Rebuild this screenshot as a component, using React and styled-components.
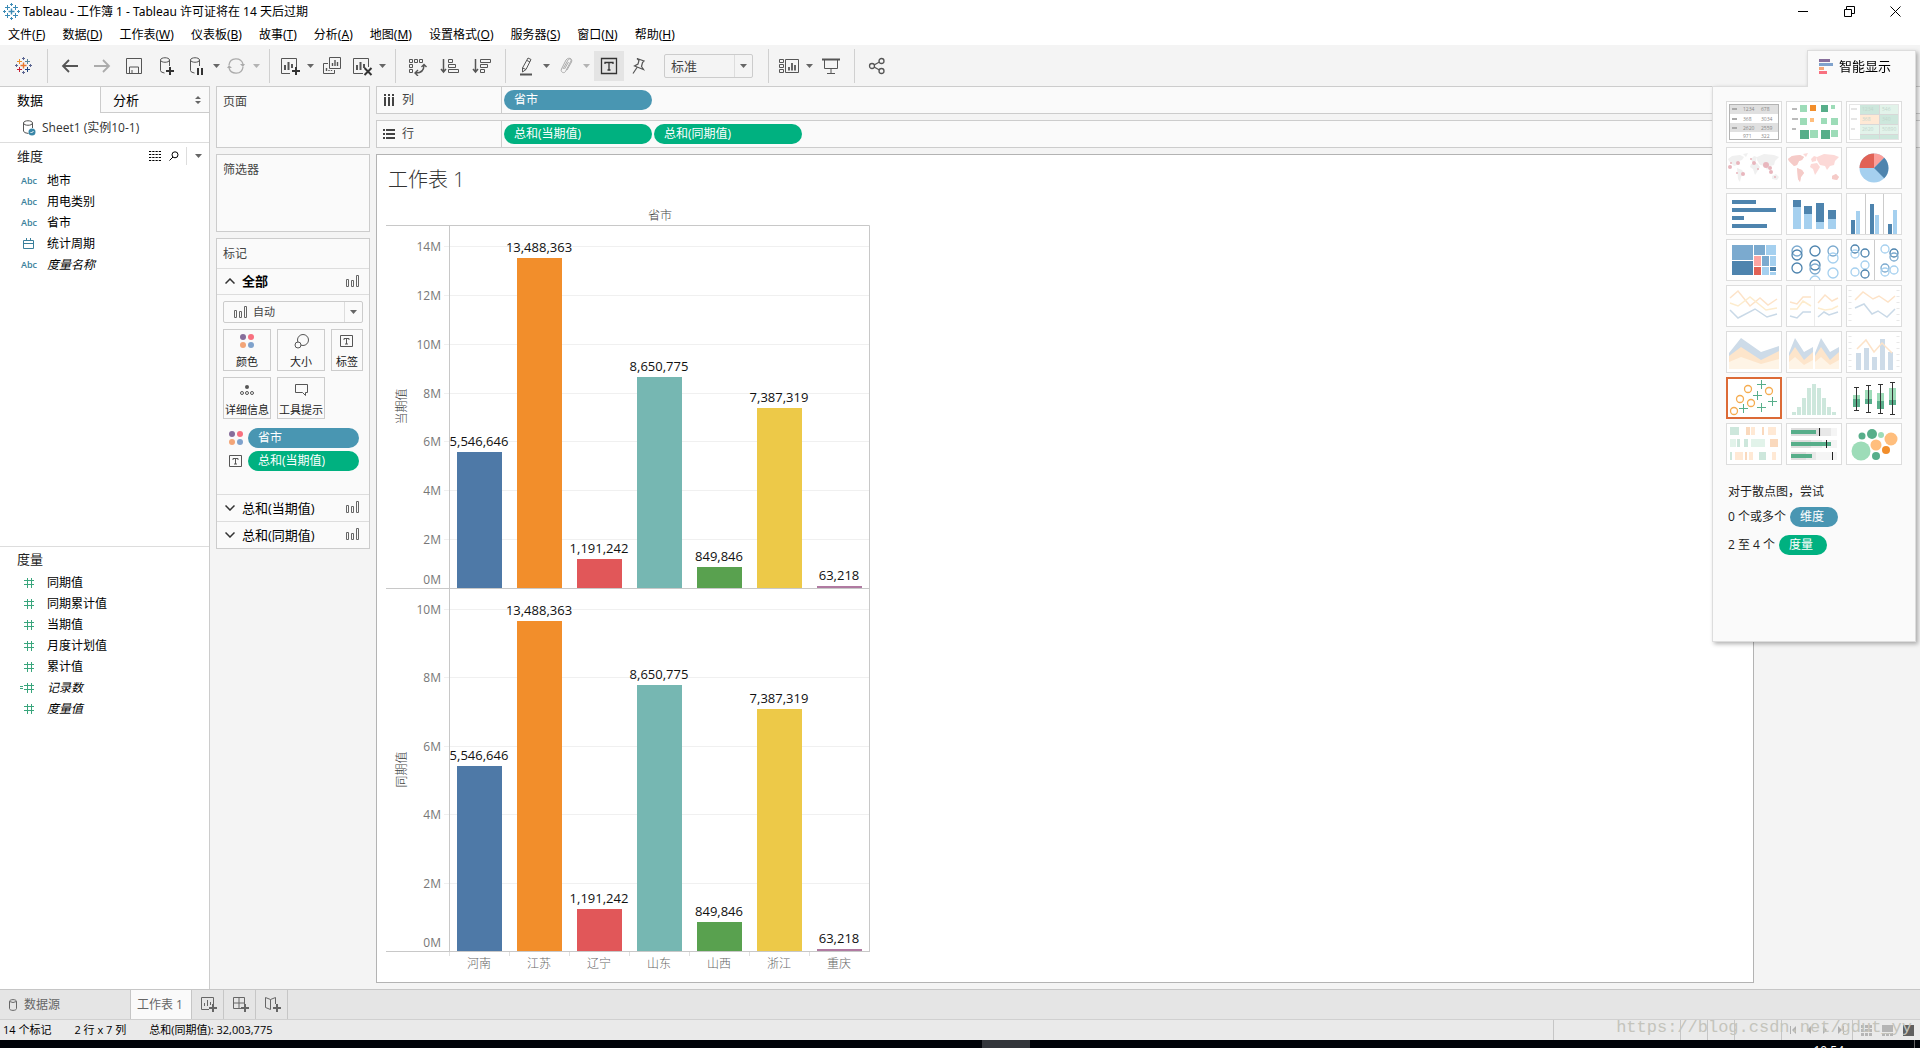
import React, { useState } from 'react';
import styled, { createGlobalStyle, css } from 'styled-components';

const GlobalStyle = createGlobalStyle`
    * {
        box-sizing: border-box;
    }
    body {
        margin: 0;
        background-color: #f4f4f4;
    }
    body, button, select {
        font-family: "Open Sans", "Noto Sans CJK SC", sans-serif;
        font-size: 12px;
        line-height: 16px;
        color: #000;
    }
    button {
        padding: 0;
        border: none;
        background: none;
        cursor: pointer;
    }
    svg {
        display: block;
        flex: none;
    }
`;

/* ---------- window ---------- */

const Container = styled.div`
    position: relative;
    display: flex;
    flex-direction: column;
    min-height: 100vh;
    overflow: hidden;
`;

const TitleBar = styled.header`
    display: flex;
    align-items: center;
    height: 23px;
    padding: 0 2px 0 3px;
    background-color: #fff;
`;

const AppName = styled.h1`
    flex: 1;
    margin: 0 0 0 3px;
    font-family: "Noto Sans", "Noto Sans CJK SC", sans-serif;
    font-size: 12px;
    font-weight: 400;
`;

const WindowButton = styled.button`
    display: flex;
    align-items: center;
    justify-content: center;
    width: 46px;
    height: 20px;
`;

const MenuBar = styled.nav`
    display: flex;
    align-items: center;
    gap: 17px;
    height: 22px;
    padding: 2px 0 0 8px;
    background-color: #fff;
`;

const MenuItem = styled.button`
    font-family: "Noto Sans", "Noto Sans CJK SC", sans-serif;
    white-space: nowrap;
`;

/* ---------- toolbar ---------- */

const Toolbar = styled.div`
    display: flex;
    align-items: center;
    height: 41px;
`;

const ToolGroup = styled.div`
    display: flex;
    align-items: center;
    height: 34px;
    padding: 0 7px 0 6px;
    border-right: 1px solid #d0d0d0;

    &:last-child {
        border-right: none;
    }
`;

const toolWidths = { logo: 34, l: 32, m: 28, s: 24, caret: 12 };

const Tool = styled.button`
    display: flex;
    align-items: center;
    justify-content: center;
    width: ${(p) => toolWidths[p.$size || 'm']}px;
    height: 30px;
    color: #555;
    opacity: ${(p) => (p.disabled ? 0.45 : 1)};
    ${(p) => p.$active && css`
        width: 30px;
        margin: 0 2px;
        background-color: #e4e4e4;
    `}
`;

const SelectBox = styled.label`
    position: relative;
    display: flex;
    ${(p) => p.$toolbar && css`
        width: 89px;
        margin: 0 8px 0 14px;
    `}

    select {
        appearance: none;
        width: 100%;
        height: ${(p) => (p.$toolbar ? 24 : 22)}px;
        padding: 0 20px 0 ${(p) => (p.$toolbar ? 6 : 29)}px;
        border: 1px solid #ccc;
        border-radius: 2px;
        background-color: ${(p) => (p.$toolbar ? '#f4f4f4' : '#fafafa')};
        color: #444;
        font-size: ${(p) => (p.$toolbar ? 13 : 11)}px;
    }
`;

const SelectCaret = styled.span`
    position: absolute;
    top: 1px;
    right: 1px;
    bottom: 1px;
    width: 18px;
    display: flex;
    align-items: center;
    justify-content: center;
    border-left: 1px solid #ddd;
    color: #666;
    pointer-events: none;
`;

const SelectIcon = styled.span`
    position: absolute;
    left: 11px;
    top: 5px;
    pointer-events: none;
`;

/* ---------- data pane ---------- */

const Body = styled.div`
    flex: 1;
    display: flex;
    align-items: stretch;
`;

const DataPane = styled.aside`
    flex: none;
    display: flex;
    flex-direction: column;
    width: 210px;
    border-right: 1px solid #ccc;
    background-color: #fff;
`;

const PaneTabs = styled.div`
    display: flex;
    height: 27px;
`;

const PaneTab = styled.button`
    display: flex;
    align-items: center;
    justify-content: space-between;
    flex: ${(p) => (p.$active ? '0 0 100px' : 1)};
    padding: ${(p) => (p.$active ? '0 17px' : '0 8px 0 12px')};
    border-top: 1px solid #ccc;
    font-size: 13px;
    ${(p) => !p.$active && css`
        border-left: 1px solid #ccc;
        border-bottom: 1px solid #ccc;
        background-color: #fafafa;
    `}
`;

const DataSource = styled.button`
    display: flex;
    align-items: center;
    gap: 6px;
    height: 30px;
    padding-left: 22px;
    border-bottom: 1px solid #ddd;
    color: #333;
`;

const FieldSection = styled.section`
    flex: ${(p) => p.$grow} 1 0;
    border-top: ${(p) => (p.$line ? '1px solid #ddd' : 'none')};
`;

const FieldHead = styled.div`
    display: flex;
    align-items: center;
    height: ${(p) => (p.$tall ? 27 : 25)}px;
    padding: 0 1px 1px 17px;
    color: #555;

    h2 {
        flex: 1;
        margin: 0;
        color: #222;
        font-size: 13px;
        font-weight: 400;
    }
`;

const HeadButton = styled.button`
    display: flex;
    align-items: center;
    justify-content: center;
    width: 19px;
    height: 18px;
`;

const HeadRule = styled.i`
    width: 1px;
    height: 18px;
    margin: 0 2px 0 3px;
    background-color: #ddd;
`;

const FieldList = styled.ul`
    margin: 0;
    padding: 0;
    list-style: none;
`;

const Field = styled.li`
    display: flex;
    align-items: center;
    height: 21px;
    font-style: ${(p) => (p.$italic ? 'italic' : 'normal')};
`;

const FieldType = styled.span`
    display: flex;
    justify-content: center;
    width: 47px;
    padding: 0 8px 0 19px;
    color: #3a7f9b;
    font-size: 9px;
    font-weight: 600;
    font-style: normal;
`;

/* ---------- cards ---------- */

const Cards = styled.div`
    flex: none;
    display: flex;
    flex-direction: column;
    gap: 6px;
    width: 154px;
    margin: 0 6px;
`;

const Card = styled.section`
    min-height: ${(p) => p.$height || 0}px;
    border: 1px solid #ccc;
    background-color: #fafafa;
`;

const CardTitle = styled.h2`
    margin: 0;
    padding: 6px;
    color: #444;
    font-size: 12px;
    line-height: 17px;
    font-weight: 400;
`;

const MarksRow = styled.button`
    display: flex;
    align-items: center;
    gap: 7px;
    width: 100%;
    height: ${(p) => (p.$open ? 26 : 27)}px;
    padding: 0 9px 1px 8px;
    border-top: 1px solid #ddd;
    font-size: 13px;
    font-weight: ${(p) => (p.$open ? 700 : 400)};
    text-align: left;
    color: #333;

    span {
        flex: 1;
        color: #000;
    }
`;

const MarksBody = styled.div`
    padding: 6px;
    border-top: 1px solid #ddd;
`;

const MarkGrid = styled.div`
    display: grid;
    grid-template-columns: 48px 48px 32px;
    gap: 6px;
    margin: 6px 0 9px;
`;

const MarkButton = styled.button`
    display: flex;
    flex-direction: column;
    align-items: center;
    justify-content: space-between;
    height: 42px;
    padding: 4px 0 0;
    border: 1px solid #ccc;
    font-size: 11px;
    white-space: nowrap;
    color: #222;
`;

const MarkPill = styled.div`
    display: flex;
    align-items: center;
    gap: 5px;
    margin-bottom: 3px;
    padding: 0 4px 0 6px;

    &:last-child {
        margin-bottom: 17px;
    }
`;

const Pill = styled.button`
    flex: ${(p) => (p.$fill ? 1 : 'none')};
    width: ${(p) => p.$width || 'auto'};
    height: 20px;
    padding: 0 10px;
    border-radius: 10px;
    background-color: ${(p) => (p.$measure ? '#00b180' : '#4996b2')};
    color: #fff;
    text-align: left;
`;

/* ---------- sheet ---------- */

const Main = styled.main`
    flex: 1;
    display: flex;
    flex-direction: column;
    gap: 6px;
    min-width: 0;
    padding-bottom: 6px;
`;

const Shelf = styled.section`
    display: flex;
    height: 28px;
    border: 1px solid #ccc;
    border-right: none;
    background-color: #fafafa;
`;

const ShelfLabel = styled.h2`
    display: flex;
    align-items: center;
    gap: 7px;
    width: 125px;
    margin: 0;
    padding-left: 6px;
    border-right: 1px solid #ccc;
    color: #444;
    font-size: 12px;
    font-weight: 400;
`;

const ShelfPills = styled.div`
    display: flex;
    align-items: center;
    gap: 2px;
    padding-left: 2px;
`;

const Sheet = styled.section`
    flex: 1;
    margin-right: 166px;
    padding: 9px;
    border: 1px solid #b3b3b3;
    background-color: #fff;
`;

const SheetTitle = styled.h2`
    margin: 0 0 4px 2px;
    color: #333;
    font-size: 20px;
    line-height: 32px;
    font-weight: 300;
`;

const ChartSvg = styled.svg`
    text {
        font-size: 12px;
        fill: #777;
        text-anchor: middle;
    }
    .value {
        font-size: 13px;
        fill: #111;
    }
    .tick {
        text-anchor: end;
    }
    .title {
        fill: #444;
        font-weight: 300;
    }
    .name {
        fill: #666;
        font-weight: 300;
    }
`;

/* ---------- show me ---------- */

const ShowMePanel = styled.aside`
    position: absolute;
    top: 50px;
    right: 4px;
    width: 204px;
    filter: drop-shadow(2px 2px 2px rgba(0, 0, 0, 0.3));
`;

const ShowMeTab = styled.button`
    display: flex;
    align-items: center;
    gap: 6px;
    width: 109px;
    height: 37px;
    margin: 0 0 -1px auto;
    padding: 0 0 6px 11px;
    border: 1px solid #ddd;
    border-bottom: none;
    position: relative;
    background-color: #fafafa;
    font-size: 13px;
`;

const ShowMeBody = styled.div`
    height: 556px;
    padding: 14px 13px;
    border: 1px solid #ddd;
    background-color: #fafafa;
`;

const ThumbGrid = styled.div`
    display: grid;
    grid-template-columns: repeat(3, 56px);
    gap: 4px;
    margin-bottom: 17px;
`;

const Thumb = styled.button`
    height: 42px;
    border: 1px solid #ddd;
    background-color: #fff;
    outline: ${(p) => (p.$selected ? '2px solid #dc6a36' : 'none')};
    outline-offset: -2px;
`;

const Hint = styled.p`
    display: flex;
    align-items: center;
    gap: 4px;
    height: 20px;
    margin: 0 0 8px;
    padding-left: 2px;
    color: #222;

    &:first-of-type {
        margin-bottom: 5px;
    }
`;

/* ---------- bottom ---------- */

const SheetTabs = styled.div`
    display: flex;
    height: 30px;
    border-top: 1px solid #c6c6c6;
    background-color: #e5e5e5;
`;

const SheetTab = styled.button`
    display: flex;
    align-items: center;
    gap: 6px;
    width: ${(p) => p.$width}px;
    padding-left: ${(p) => (p.$current ? 6 : 9)}px;
    border-right: 1px solid #c6c6c6;
    background-color: ${(p) => (p.$current ? '#fafafa' : 'transparent')};
    color: #666;
`;

const StatusBar = styled.footer`
    position: relative;
    display: flex;
    height: 21px;
    border-top: 1px solid #d0d0d0;
    background-color: #eaeaea;
    font-size: 11px;
`;

const StatusText = styled.div`
    flex: 1;
    display: flex;
    align-items: center;
    gap: 23px;
    padding-left: 3px;
`;

const StatusCell = styled.div`
    display: flex;
    align-items: center;
    width: ${(p) => p.$width}px;
    padding-left: 3px;
    border-left: 1px solid #c6c6c6;
`;

const StatusButton = styled.button`
    display: flex;
    justify-content: center;
    width: ${(p) => (p.$wide ? 21 : 16)}px;
`;

const Watermark = styled.a`
    position: absolute;
    right: 8px;
    top: -2px;
    color: #c4c4bc;
    font-family: "Liberation Mono", monospace;
    font-size: 17px;
    line-height: 20px;
    text-decoration: none;
`;

const Taskbar = styled.div`
    display: flex;
    justify-content: flex-end;
    height: 8px;
    overflow: hidden;
    background-color: #000308;
`;

const TaskSlot = styled.span`
    width: 48px;
    background-color: #33363b;
`;

const Clock = styled.time`
    width: 885px;
    padding: 3px 70px 0 0;
    border-right: 1px solid #666;
    margin-right: 5px;
    color: #fff;
    text-align: right;
`;

/* ---------- icons ---------- */

const Icon = ({ w = 20, h = 20, children, ...rest }) => (
    <svg width={w} height={h} viewBox={`0 0 ${w} ${h}`} fill="none" stroke="currentColor" strokeWidth="1" {...rest}>
        {children}
    </svg>
);

const Caret = () => <Icon w={7} h={4} stroke="none"><path d="M0 0h7L3.5 4z" fill="#666" /></Icon>;

const TableauMark = ({ mono }) => {
    const c = mono
        ? ['#3c8bb5', '#3c8bb5', '#3c8bb5', '#3c8bb5', '#3c8bb5', '#3c8bb5']
        : ['#e8762c', '#5b879b', '#eb912c', '#c72035', '#5c6692', '#1f457e'];
    return (
        <Icon w={17} h={17}>
            <path d="M8.5 5.5v6M5.5 8.5h6" stroke={c[0]} strokeWidth="1.4" />
            <path d="M12.5 2v5M10 4.5h5" stroke={c[1]} />
            <path d="M4.5 2v5M2 4.5h5" stroke={c[2]} />
            <path d="M4.5 10v5M2 12.5h5" stroke={c[3]} />
            <path d="M12.5 10v5M10 12.5h5" stroke={c[5]} />
            <path d="M8.5 0v3M7 1.5h3M1.5 7v3M0 8.5h3" stroke={c[4]} />
            <path d="M8.5 14v3M7 15.5h3M15.5 7v3M14 8.5h3" stroke={c[4]} />
        </Icon>
    );
};

const Plus = ({ x, y }) => <path d={`M${x} ${y - 4}v8M${x - 4} ${y}h8`} stroke="#333" strokeWidth="2" />;

const Cylinder = () => (
    <path d="M3.5 4.5v10q0 2 4 2.5M3.5 4c0-3 9-3 9 0s-9 3-9 0M12.5 4v6" />
);

const icons = {
    back: <Icon strokeWidth="1.8"><path d="M18 10H3M9 4L3 10l6 6" /></Icon>,
    forward: <Icon strokeWidth="1.8"><path d="M2 10h15M11 4l6 6-6 6" /></Icon>,
    save: <Icon><path d="M2.5 2.5h15v15h-15zM5.5 17v-6h9v6M8 14v3" /></Icon>,
    dbAdd: <Icon w={18}><Cylinder /><Plus x={13} y={15} /></Icon>,
    dbPause: <Icon w={18}><Cylinder /><path d="M11 12v7M15 12v7" stroke="#333" strokeWidth="2" /></Icon>,
    refresh: (
        <Icon strokeWidth="1.3">
            <path d="M3 9c1-8 12-8 14-1M17 11c-1 8-12 8-14 1" />
            <path d="M14 8h5l-2 3zM1 12h5l-3-3z" fill="currentColor" stroke="none" />
        </Icon>
    ),
    sheetAdd: (
        <Icon w={22}>
            <path d="M11 17.5H2.5v-15h15V11" />
            <path d="M6 14V9M9.5 14V6M13 12V8" strokeWidth="2" />
            <Plus x={17} y={15} />
        </Icon>
    ),
    duplicate: (
        <Icon>
            <path d="M7.5 1.5h11v11h-11zM6 7.5H1.5v10h11V14" />
            <path d="M10.5 10V7M13 10V4M15.5 10V6M4.5 15v-3M7 15v-1M9.5 15v-1" strokeWidth="1.4" />
        </Icon>
    ),
    clear: (
        <Icon w={22}>
            <path d="M12 17.5H2.5v-15h15V11" />
            <path d="M6 14V9M9.5 14V6M13 12V8" strokeWidth="2" />
            <path d="M13.5 12l7 7M20.5 12l-7 7" stroke="#333" strokeWidth="2" />
        </Icon>
    ),
    swap: (
        <Icon>
            <path d="M1.5 3.5h3v3h-3zM6.5 3.5h3v3h-3zM11.5 3.5h3v3h-3zM1.5 8.5h3v3h-3zM1.5 13.5h3v3h-3z" />
            <path d="M8 17c7 0 8-4 8-8M13.5 11L16 8.5l2.5 2.5M10 14l-3 3 3 3" strokeWidth="1.4" />
        </Icon>
    ),
    sortAsc: (
        <Icon>
            <path d="M3.5 3v13M1 13l2.5 3L6 13" strokeWidth="1.5" />
            <path d="M8.5 3.5h4v3h-4zM8.5 8.5h7v3h-7zM8.5 13.5h10v3h-10z" />
        </Icon>
    ),
    sortDesc: (
        <Icon>
            <path d="M3.5 3v13M1 13l2.5 3L6 13" strokeWidth="1.5" />
            <path d="M8.5 3.5h10v3h-10zM8.5 8.5h7v3h-7zM8.5 13.5h4v3h-4z" />
        </Icon>
    ),
    pen: (
        <Icon w={16}>
            <path d="M10 2l3 1.5-5 10-3.500 2.500V12zM9 4.500l3 1.500M4.500 12L8 13.500" />
            <path d="M2 18.500h12" strokeWidth="2" />
        </Icon>
    ),
    clip: (
        <Icon w={14}>
            <path d="M4 13l5-9c1-2 4-1 3 1L6.500 15.500C5 18 1 16 2.500 13L7 4c2-3 7-2 5.500 2L8 14M9.500 6L5.500 13" />
        </Icon>
    ),
    text: (
        <Icon stroke="#333" strokeWidth="1.3">
            <path d="M2.5 2.5h15v15h-15zM6 8V6.500h8V8M10 6.500V14M8.500 14h3" />
        </Icon>
    ),
    pin: <Icon w={16}><path d="M7 2.500l7 2.500-1.500 1.500-1 4 2 3-9-3.500 3.500-2 1-3.500zM7 11.500l-4 6" strokeWidth="1.2" /></Icon>,
    cards: (
        <Icon w={22}>
            <path d="M1.5 3.5h4v3h-4zM1.5 8.5h4v3h-4zM1.5 13.5h4v3h-4zM7.500 3.500h13v13h-13z" />
            <path d="M11 14.500V11M14 14.500V7M17 14.500V9" strokeWidth="1.8" />
        </Icon>
    ),
    present: (
        <Icon>
            <path d="M1 3.500h18" strokeWidth="2" />
            <path d="M3.500 4v8.500h13V4M10 12.500v5M6 17.500h8" />
        </Icon>
    ),
    share: (
        <Icon strokeWidth="1.3">
            <circle cx="5" cy="10" r="2.500" /><circle cx="14.500" cy="5" r="2.500" /><circle cx="14.500" cy="15" r="2.500" />
            <path d="M7 9l5.500-3M7 11l5.500 3" />
        </Icon>
    ),
};

const BarsIcon = () => (
    <Icon w={14} h={13}><path d="M.5 4.5h2v7h-2zM5.5 5.5h2v6h-2zM10.5.5h2v11h-2z" stroke="#666" /></Icon>
);

const ColorDots = () => (
    <Icon w={14} h={14} stroke="none">
        <circle cx="3" cy="3" r="3" fill="#876e9b" /><circle cx="11" cy="3" r="3" fill="#f8707f" />
        <circle cx="3" cy="11" r="3" fill="#f3a578" /><circle cx="11" cy="11" r="3" fill="#7fa2cc" />
    </Icon>
);

const TextBoxIcon = () => (
    <Icon w={14} h={14}><path d="M.5 1.5h12v11H.5zM4 6V4.5h5V6M6.5 4.5V10M5 10h3" stroke="#555" /></Icon>
);

const HashIcon = ({ calc }) => (
    <Icon w={18} h={12} stroke="#39a57c">
        <path d="M7.5 1v10M11.5 1v10M4 3.5h10M4 7.5h10" />
        {calc && <path d="M0 4.5h3M0 6.5h3" />}
    </Icon>
);

const CalendarIcon = () => (
    <Icon w={12} h={12}><path d="M.5 2.5h10v8H.5zM.5 5.5h10M3.5 0v3M7.5 0v3" /></Icon>
);

/* ---------- show me thumbnails ---------- */

const B = '#4e84ae';
const L = '#a5d0ef';
const M = '#7baacf';
const Gd = '#57ae8a';
const Gl = '#9ddcb8';

const rects = (list) => list.map(([x, y, w, h, fill], i) => <rect key={i} x={x} y={y} width={w} height={h} fill={fill} />);
const rings = (list, r = 5) => list.map(([x, y, c], i) => <circle key={i} cx={x} cy={y} r={r} fill="none" stroke={c} strokeWidth="1.3" />);
const line = (d, c) => <path d={d} fill="none" stroke={c} strokeWidth="1.5" />;

const land = 'M2 12l4-3 8-1 4 2-2 3-3 1-2 4-3 1-2-2-3-3zM11 21l5 2 2 3-3 4-1 5-2-3zM25 12l3-3 3 1-1 4-4 1zM25 17l6-1 3 4-3 5-2 3-2-6-3-2zM31 10l7-3 10 1 5 2-4 4-1 4-4 1-3 4-2-4-5-1-3-5zM46 29l4-2 3 3-2 3-5-1zM17 7l5-1-2 4z';

const thumbs = [
    {
        name: '文本表',
        art: (
            <>
                {rects([[4, 4, 48, 9, '#e0e0e0'], [4, 22, 48, 9, '#e0e0e0'], [6, 7, 5, 2, '#aaa'], [6, 17, 5, 2, '#aaa'], [6, 26, 5, 2, '#aaa']])}
                <rect x="3.5" y="3.5" width="49" height="35" fill="none" stroke="#b3b3b3" />
                <g fontSize="5" fill="#888">
                    <text x="17" y="10">1234</text><text x="35" y="10">678</text>
                    <text x="17" y="20">368</text><text x="35" y="20">3034</text>
                    <text x="17" y="29">2620</text><text x="35" y="29">2559</text>
                    <text x="17" y="37">971</text><text x="35" y="37">322</text>
                </g>
            </>
        ),
    },
    {
        name: '热图',
        art: rects([
            [6, 7, 5, 2, '#bbb'], [6, 17, 6, 2, '#bbb'], [6, 27, 4, 2, '#bbb'],
            [14, 4, 7, 7, Gl], [24, 4, 6, 6, '#f28e2b'], [35, 4, 7, 7, Gd], [45, 4, 4, 4, Gl],
            [14, 17, 7, 7, Gl], [24, 17, 4, 4, '#ffbe7d'], [35, 17, 6, 6, Gl], [45, 17, 7, 7, Gl],
            [14, 29, 9, 9, Gd], [24, 29, 8, 8, Gl], [35, 29, 9, 9, Gd], [45, 29, 7, 7, Gl],
        ]),
    },
    {
        name: '突出显示表',
        art: (
            <>
                {rects([
                    [5, 7, 6, 2, '#e5e5e5'], [5, 17, 6, 2, '#e5e5e5'], [5, 27, 4, 2, '#e5e5e5'],
                    [14, 4, 19, 9, '#cde7dc'], [34, 4, 18, 9, '#e2f3ea'], [14, 14, 19, 9, '#ffe9d5'], [34, 14, 18, 9, '#cde7dc'],
                    [14, 24, 19, 9, '#e2f3ea'], [34, 24, 18, 9, '#e2f3ea'], [14, 34, 19, 4, '#cde7dc'], [34, 34, 18, 4, '#cde7dc'],
                ])}
                <rect x="3.5" y="3.5" width="49" height="35" fill="none" stroke="#e5e5e5" />
                <path d="M33.5 4v34M14 13.5h38M14 23.5h38M14 33.5h38" stroke="#d8d8d8" />
                <g fontSize="5" fill="#c3d6cd">
                    <text x="16" y="10">1234</text><text x="36" y="10">546</text>
                    <text x="16" y="20">368</text><text x="36" y="20">340</text>
                    <text x="16" y="30">2620</text><text x="36" y="30">50890</text>
                </g>
            </>
        ),
    },
    {
        name: '符号地图',
        art: (
            <>
                <path d={land} fill="#f0f0f0" />
                {[[4, 20, 2], [5, 16, 1], [12, 16, 2], [11, 26, 1], [17, 27, 2], [25, 12, 1], [28, 16, 2], [32, 22, 1], [40, 18, 3], [44, 21, 2], [45, 25, 2], [49, 30, 1]].map(([x, y, r]) => (
                    <circle key={`${x}-${y}`} cx={x} cy={y} r={r} fill="#e8b6bd" />
                ))}
            </>
        ),
    },
    {
        name: '填充地图',
        art: (
            <>
                <path d={land} fill="#fcd9d7" />
                <path d="M2 12l4-3 8-1 4 2-2 3-3 1-2 4-3 1-2-2-3-3zM11 21l5 2 2 3-3 4-1 5-2-3zM46 29l4-2 3 3-2 3-5-1z" fill="#f5cbc8" />
            </>
        ),
    },
    {
        name: '饼图',
        art: (
            <>
                <circle cx="28" cy="21" r="14.5" fill={L} />
                <path d="M28 21V6.500a14.500 14.500 0 0 0-14.500 14.500z" fill="#e16256" />
                <path d="M28 21V6.500a14.500 14.500 0 0 1 10.200 4.200z" fill="#fb9f9b" />
                <path d="M28 21l10.200-10.300a14.500 14.500 0 0 1 0 20.500z" fill={B} />
            </>
        ),
    },
    { name: '水平条', art: rects([[6, 7, 24, 4, B], [6, 15, 44, 4, B], [6, 23, 12, 4, B], [6, 31, 35, 4, B]]) },
    {
        name: '堆叠条',
        art: rects([
            [7, 7, 8, 7, B], [7, 14, 8, 22, L], [18, 13, 8, 8, B], [18, 21, 8, 15, L],
            [30, 10, 8, 19, B], [30, 29, 8, 7, L], [42, 17, 8, 9, B], [42, 26, 8, 10, L],
        ]),
    },
    {
        name: '并排条',
        art: rects([
            [19, 1, 1, 40, '#ccc'], [37, 1, 1, 40, '#ccc'],
            [5, 27, 4, 14, B], [10, 18, 4, 23, L], [24, 11, 4, 30, B], [29, 22, 4, 19, L], [42, 31, 4, 10, B], [47, 17, 4, 24, L],
        ]),
    },
    {
        name: '树状图',
        art: rects([
            [6, 6, 21, 15, M], [6, 22, 21, 14, B], [28, 6, 11, 10, M], [40, 6, 10, 10, L],
            [28, 17, 7, 10, '#fda5a2'], [36, 17, 7, 10, M], [44, 17, 6, 10, L],
            [28, 28, 7, 8, '#e16256'], [36, 28, 7, 8, L], [44, 28, 6, 4, B], [44, 33, 6, 3, L],
        ]),
    },
    {
        name: '圆视图',
        art: rings([[11, 12, M], [11, 16, B], [11, 29, B], [29, 12, B], [29, 26, B], [29, 30, M], [29, 42, L], [47, 12, M], [47, 19, L], [47, 34, L]]),
    },
    {
        name: '并排圆',
        art: (
            <>
                <path d="M28.5 1v40" stroke="#ccc" />
                {rings([[9, 10, B], [9, 15, L], [19, 14, B], [19, 26, L], [9, 33, L], [19, 35, B], [39, 10, L], [48, 14, B], [48, 18, M], [39, 29, M], [39, 33, L], [48, 31, L]], 4)}
            </>
        ),
    },
    {
        name: '线(连续)',
        art: (
            <>
                {line('M4 13l8-7 12 15 10-8 8 7 9-6', '#fde3c8')}
                {line('M4 18l8 3 12-9 16 13 11-2', '#fdeccd')}
                {line('M4 25l8 8 17-9 12 8 10-3', '#c9d9e7')}
            </>
        ),
    },
    {
        name: '线(离散)',
        art: (
            <>
                <path d="M28.5 1v40" stroke="#ececec" />
                {line('M4 17l7 2 6-7h8M32 18l7-8 7 6 6-3', '#fde3c8')}
                {line('M4 24h7l6-8 8 5M32 23l7 2 7-1 6-3', '#fdeccd')}
                {line('M4 31l7 2 6-6h8M32 32l6-5 5 3 9-3', '#c9d9e7')}
            </>
        ),
    },
    {
        name: '双线',
        art: (
            <>
                <path d="M4 5v34M52 5v34" stroke="#e8e8e8" strokeWidth="3" strokeDasharray="1 5" />
                {line('M9 15l8-8 10 7 6-3 9 6 7-6', '#fde3c8')}
                {line('M9 23l9-4 8 10 6-3 9 6 8-8', '#c9d9e7')}
            </>
        ),
    },
    {
        name: '面积图(连续)',
        art: (
            <>
                <path d="M3 22L15 7l20 14 18-6v23H3z" fill="#cddbe8" />
                <path d="M3 25l12-9 20 13 18-9v18H3z" fill="#fde5cb" />
                <path d="M3 31l12-5 20 7 18-5v10H3z" fill="#fef4e6" />
            </>
        ),
    },
    {
        name: '面积图(离散)',
        art: ['translate(0 0)', 'translate(26 0)'].map((t) => (
            <g key={t} transform={t}>
                <path d="M3 22L9 7l9 14 9-5v22H3z" fill="#cddbe8" />
                <path d="M3 25l6-9 9 13 9-8v17H3z" fill="#fde5cb" />
                <path d="M3 31l6-5 9 8 9-5v9H3z" fill="#fef4e6" />
            </g>
        )),
    },
    {
        name: '双组合图',
        art: (
            <>
                <path d="M4 5v34M52 5v34" stroke="#e8e8e8" strokeWidth="3" strokeDasharray="1 5" />
                {rects([[10, 22, 5, 17, '#cddbe8'], [18, 17, 5, 22, '#cddbe8'], [26, 26, 5, 13, '#cddbe8'], [34, 8, 5, 31, '#cddbe8'], [42, 21, 5, 18, '#cddbe8']])}
                {line('M11 18l9-9 8 12 8-9 10 10', '#fde3c8')}
            </>
        ),
    },
    {
        name: '散点图',
        art: (
            <>
                {rings([[8, 34, '#f5ac50'], [14, 22, '#f5ac50'], [22, 12, '#f5ac50'], [25, 26, '#f5ac50'], [43, 14, '#f5ac50']], 3.5)}
                <path d="M35.500 3v9M31 7.500h9M31.500 14v9M27 18.500h9M46.500 20v9M42 24.500h9M35.500 26v9M31 30.500h9M17.500 27v9M13 31.500h9" stroke={Gd} />
            </>
        ),
    },
    {
        name: '直方图',
        art: rects([3, 8, 17, 27, 31, 27, 17, 8, 3].map((h, i) => [6 + i * 5, 38 - h, 4, h, '#cde7dc'])),
    },
    {
        name: '盒须图',
        art: (
            <>
                {rects([[7, 18, 7, 4, Gl], [7, 22, 7, 8, Gd], [19, 13, 7, 9, Gl], [19, 22, 7, 5, Gd], [31, 16, 7, 8, Gl], [31, 24, 7, 8, Gd], [43, 11, 7, 12, Gl], [43, 23, 7, 5, Gd]])}
                <path d="M10.500 10v23M8 10.500h5M8 33.500h5M22.500 8v27M20 8.500h5M20 35.500h5M34.500 7v29M32 7.500h5M32 36.500h5M46.500 5v32M44 5.500h5M44 37.500h5" stroke="#333" />
            </>
        ),
    },
    {
        name: '甘特图',
        art: rects([
            [4, 4, 9, 8, '#cde7dc'], [20, 4, 4, 8, '#fad9bd'], [25, 4, 4, 8, '#ffe9d5'], [36, 4, 2, 8, '#fad9bd'], [42, 4, 8, 8, '#ffe9d5'],
            [4, 16, 6, 8, '#e2f3ea'], [11, 16, 3, 8, '#cde7dc'], [18, 16, 4, 8, '#cde7dc'], [25, 16, 14, 8, '#e2f3ea'], [44, 16, 8, 8, '#fad9bd'],
            [4, 29, 2, 8, '#cde7dc'], [9, 29, 8, 8, '#ffe9d5'], [19, 29, 2, 8, '#fad9bd'], [23, 29, 4, 8, '#ffe9d5'], [33, 29, 7, 8, '#cde7dc'], [46, 29, 4, 8, '#ffe9d5'],
        ]),
    },
    {
        name: '靶心图',
        art: rects([
            [5, 5, 46, 8, '#f5f5f5'], [5, 5, 40, 8, '#e8e8e8'], [5, 5, 30, 8, '#ddd'], [5, 7, 25, 4, Gd], [33, 5, 1, 8, '#222'],
            [5, 17, 46, 8, '#f5f5f5'], [5, 17, 31, 8, '#e8e8e8'], [5, 17, 20, 8, '#ddd'], [5, 19, 40, 4, Gd], [40, 17, 1, 8, '#222'],
            [5, 29, 46, 8, '#f5f5f5'], [5, 29, 25, 8, '#e8e8e8'], [5, 29, 15, 8, '#ddd'], [5, 31, 21, 4, Gd], [46, 29, 1, 8, '#222'],
        ]),
    },
    {
        name: '填充气泡图',
        art: [[15, 28, 9.5, Gl], [16, 13, 3.5, Gd], [26, 11, 5, Gd], [35, 12, 3, Gl], [45, 16, 6.5, '#ffbe7d'], [30, 22, 5.5, '#ffbe7d'], [40, 27, 4, '#f28e2b'], [30, 33, 4, Gd]].map(([x, y, r, c]) => (
            <circle key={`${x}-${y}`} cx={x} cy={y} r={r} fill={c} />
        )),
    },
];

/* ---------- chart ---------- */

const provinces = [
    { name: '河南', value: 5546646, prior: 5410000, color: '#4e79a7' },
    { name: '江苏', value: 13488363, prior: 9650000, color: '#f28e2b' },
    { name: '辽宁', value: 1191242, prior: 1230000, color: '#e15759' },
    { name: '山东', value: 8650775, prior: 7780000, color: '#76b7b2' },
    { name: '山西', value: 849846, prior: 850000, color: '#59a14f' },
    { name: '浙江', value: 7387319, prior: 7080000, color: '#edc948' },
    { name: '重庆', value: 63218, prior: 63000, color: '#b07aa1' },
];

const AXIS = 63;
const BAND = 60;
const RIGHT = AXIS + BAND * provinces.length;

const BarPane = ({ top, base, field, title, max, unit }) => {
    const ticks = [];
    for (let t = 0; t <= max; t += 2) ticks.push(t);
    const mid = (top + base) / 2;
    return (
        <g>
            {ticks.map((t) => {
                const y = Math.round(base - t * unit);
                return (
                    <g key={t}>
                        {t > 0 && <path d={`M${AXIS - 5} ${y + 0.5}H${RIGHT}`} stroke="#f0f0f0" />}
                        <text className="tick" x={AXIS - 8} y={t ? y + 5 : y - 4}>{t}M</text>
                    </g>
                );
            })}
            {provinces.map((p, i) => {
                const h = Math.max(2, Math.round((p[field] / 1e6) * unit));
                return (
                    <g key={p.name}>
                        <rect x={AXIS + 8 + i * BAND} y={base - h} width="45" height={h} fill={p.color} />
                        <text className="value" x={AXIS + 30 + i * BAND} y={base - h - 6}>{p.value.toLocaleString('en-US')}</text>
                    </g>
                );
            })}
            <text className="title" transform={`translate(20 ${mid}) rotate(-90)`}>{title}</text>
            <path d={`M0 ${base + 0.5}H${RIGHT + 1}`} stroke="#c8c8c8" />
        </g>
    );
};

const Chart = () => (
    <ChartSvg width="490" height="772" viewBox="0 0 490 772" role="img" aria-label="省市">
        <text className="title" x={AXIS + 211} y="20">省市</text>
        <BarPane top={25} base={388} field="value" title="当期值" max={14} unit={24.43} />
        <BarPane top={388} base={751} field="prior" title="同期值" max={10} unit={34.2} />
        <path d={`M0 25.5H${RIGHT + 0.5}V751M${AXIS + 0.5} 25V751`} fill="none" stroke="#c8c8c8" />
        {provinces.map((p, i) => (
            <g key={p.name}>
                <path d={`M${AXIS + i * BAND + 0.5} 752v4`} stroke="#e0e0e0" />
                <text className="name" x={AXIS + 30 + i * BAND} y="768">{p.name}</text>
            </g>
        ))}
    </ChartSvg>
);

const menus = [
    ['文件', 'F'], ['数据', 'D'], ['工作表', 'W'], ['仪表板', 'B'], ['故事', 'T'], ['分析', 'A'],
    ['地图', 'M'], ['设置格式', 'O'], ['服务器', 'S'], ['窗口', 'N'], ['帮助', 'H'],
];

const dimensions = [
    { name: '地市' }, { name: '用电类别' }, { name: '省市' }, { name: '统计周期', date: true }, { name: '度量名称', italic: true },
];

const measures = [
    { name: '同期值' }, { name: '同期累计值' }, { name: '当期值' }, { name: '月度计划值' }, { name: '累计值' },
    { name: '记录数', italic: true, calc: true }, { name: '度量值', italic: true },
];

const ToolCaret = (props) => <Tool $size="caret" {...props}><Caret /></Tool>;

const App = () => {
    const [chartType, setChartType] = useState('散点图');
    const [fit, setFit] = useState('标准');
    const [mark, setMark] = useState('自动');

    return (
        <Container>
            <GlobalStyle />
            <TitleBar>
                <TableauMark mono />
                <AppName>Tableau - 工作簿 1 - Tableau 许可证将在 14 天后过期</AppName>
                <WindowButton aria-label="最小化"><Icon w={11} h={11} stroke="#000"><path d="M0 5.5h10" /></Icon></WindowButton>
                <WindowButton aria-label="还原"><Icon w={11} h={11} stroke="#000"><path d="M.5 3.5h7v7h-7zM2.5 3V.5h8v7H8" /></Icon></WindowButton>
                <WindowButton aria-label="关闭"><Icon w={11} h={11} stroke="#000"><path d="M.5.5l10 10M10.5.5l-10 10" /></Icon></WindowButton>
            </TitleBar>
            <MenuBar>
                {menus.map(([name, key]) => <MenuItem key={key}>{name}(<u>{key}</u>)</MenuItem>)}
            </MenuBar>

            <Toolbar>
                <ToolGroup><Tool $size="logo" aria-label="起始页"><TableauMark /></Tool></ToolGroup>
                <ToolGroup>
                    <Tool $size="l" aria-label="撤消">{icons.back}</Tool>
                    <Tool $size="l" aria-label="重做" disabled>{icons.forward}</Tool>
                    <Tool $size="l" aria-label="保存">{icons.save}</Tool>
                    <Tool $size="l" aria-label="新建数据源">{icons.dbAdd}</Tool>
                    <Tool aria-label="暂停自动更新">{icons.dbPause}</Tool>
                    <ToolCaret aria-label="自动更新选项" />
                    <Tool aria-label="运行更新" disabled>{icons.refresh}</Tool>
                    <ToolCaret aria-label="更新选项" disabled />
                </ToolGroup>
                <ToolGroup>
                    <Tool aria-label="新建工作表">{icons.sheetAdd}</Tool>
                    <ToolCaret aria-label="新建选项" />
                    <Tool $size="l" aria-label="复制">{icons.duplicate}</Tool>
                    <Tool aria-label="清除工作表">{icons.clear}</Tool>
                    <ToolCaret aria-label="清除选项" />
                </ToolGroup>
                <ToolGroup>
                    <Tool $size="l" aria-label="交换行和列">{icons.swap}</Tool>
                    <Tool $size="l" aria-label="升序排序">{icons.sortAsc}</Tool>
                    <Tool $size="l" aria-label="降序排序">{icons.sortDesc}</Tool>
                </ToolGroup>
                <ToolGroup>
                    <Tool aria-label="突出显示">{icons.pen}</Tool>
                    <ToolCaret aria-label="突出显示选项" />
                    <Tool aria-label="组成员" disabled>{icons.clip}</Tool>
                    <ToolCaret aria-label="组选项" disabled />
                    <Tool $active aria-label="显示标记标签">{icons.text}</Tool>
                    <Tool $size="s" aria-label="固定轴">{icons.pin}</Tool>
                    <SelectBox $toolbar>
                        <select aria-label="适合" value={fit} onChange={(e) => setFit(e.target.value)}>
                            <option>标准</option>
                            <option>适合宽度</option>
                            <option>整个视图</option>
                        </select>
                        <SelectCaret><Caret /></SelectCaret>
                    </SelectBox>
                </ToolGroup>
                <ToolGroup>
                    <Tool aria-label="显示/隐藏卡">{icons.cards}</Tool>
                    <ToolCaret aria-label="卡选项" />
                    <Tool $size="l" aria-label="演示模式">{icons.present}</Tool>
                </ToolGroup>
                <ToolGroup><Tool $size="l" aria-label="共享">{icons.share}</Tool></ToolGroup>
            </Toolbar>

            <Body>
                <DataPane>
                    <PaneTabs>
                        <PaneTab $active>数据</PaneTab>
                        <PaneTab>
                            分析
                            <Icon w={6} h={8} stroke="none"><path d="M0 3l3-3 3 3zM0 5h6L3 8z" fill="#666" /></Icon>
                        </PaneTab>
                    </PaneTabs>
                    <DataSource>
                        <Icon w={14} h={16} stroke="#555">
                            <path d="M1.5 3v8q0 2 5 2.5M1.5 3c0-3 9-3 9 0s-9 3-9 0M10.5 3v5" />
                            <circle cx="10" cy="12" r="3.5" fill="#3a87a8" stroke="none" />
                            <path d="M8.5 12l1 1 2-2" stroke="#fff" />
                        </Icon>
                        Sheet1 (实例10-1)
                    </DataSource>
                    <FieldSection $grow={21}>
                        <FieldHead $tall>
                            <h2>维度</h2>
                            <HeadButton aria-label="查看数据">
                                <Icon w={12} h={10}><path d="M0 .5h12M0 3.5h12M0 6.5h12M0 9.5h12" strokeDasharray="2.250 1" /></Icon>
                            </HeadButton>
                            <HeadButton aria-label="查找字段">
                                <Icon w={10} h={10}><circle cx="6" cy="3.8" r="3" /><path d="M4 6L.5 9.5" /></Icon>
                            </HeadButton>
                            <HeadRule />
                            <HeadButton aria-label="维度菜单"><Caret /></HeadButton>
                        </FieldHead>
                        <FieldList>
                            {dimensions.map((f) => (
                                <Field key={f.name} $italic={f.italic}>
                                    <FieldType>{f.date ? <CalendarIcon /> : 'Abc'}</FieldType>
                                    {f.name}
                                </Field>
                            ))}
                        </FieldList>
                    </FieldSection>
                    <FieldSection $grow={23} $line>
                        <FieldHead><h2>度量</h2></FieldHead>
                        <FieldList>
                            {measures.map((f) => (
                                <Field key={f.name} $italic={f.italic}>
                                    <FieldType><HashIcon calc={f.calc} /></FieldType>
                                    {f.name}
                                </Field>
                            ))}
                        </FieldList>
                    </FieldSection>
                </DataPane>

                <Cards>
                    <Card $height={62}><CardTitle>页面</CardTitle></Card>
                    <Card $height={78}><CardTitle>筛选器</CardTitle></Card>
                    <Card>
                        <CardTitle>标记</CardTitle>
                        <MarksRow $open>
                            <Icon w={10} h={6} strokeWidth="1.5"><path d="M.5 5.5L5 1l4.5 4.5" /></Icon>
                            <span>全部</span>
                            <BarsIcon />
                        </MarksRow>
                        <MarksBody>
                            <SelectBox>
                                <SelectIcon><BarsIcon /></SelectIcon>
                                <select aria-label="标记类型" value={mark} onChange={(e) => setMark(e.target.value)}>
                                    <option>自动</option>
                                    <option>条形图</option>
                                    <option>线</option>
                                </select>
                                <SelectCaret><Caret /></SelectCaret>
                            </SelectBox>
                            <MarkGrid>
                                <MarkButton><ColorDots />颜色</MarkButton>
                                <MarkButton>
                                    <Icon w={15} h={15} stroke="#555"><circle cx="9" cy="6" r="5.5" /><circle cx="4" cy="11" r="3" fill="#fafafa" /></Icon>
                                    大小
                                </MarkButton>
                                <MarkButton><TextBoxIcon />标签</MarkButton>
                                <MarkButton>
                                    <Icon w={14} h={14} stroke="#555">
                                        <circle cx="7" cy="5" r="2" fill="#555" stroke="none" />
                                        <circle cx="2" cy="11" r="1.5" /><circle cx="7" cy="11" r="1.5" /><circle cx="12" cy="11" r="1.5" />
                                    </Icon>
                                    详细信息
                                </MarkButton>
                                <MarkButton>
                                    <Icon w={15} h={15} stroke="#555"><path d="M1.5 2.5h12v8h-2v3l-3-3h-7z" /></Icon>
                                    工具提示
                                </MarkButton>
                            </MarkGrid>
                            <MarkPill><ColorDots /><Pill $fill>省市</Pill></MarkPill>
                            <MarkPill><TextBoxIcon /><Pill $fill $measure>总和(当期值)</Pill></MarkPill>
                        </MarksBody>
                        {['总和(当期值)', '总和(同期值)'].map((name) => (
                            <MarksRow key={name}>
                                <Icon w={10} h={6} strokeWidth="1.5"><path d="M.5.5L5 5l4.5-4.5" /></Icon>
                                <span>{name}</span>
                                <BarsIcon />
                            </MarksRow>
                        ))}
                    </Card>
                </Cards>

                <Main>
                    <Shelf>
                        <ShelfLabel>
                            <Icon w={12} h={12} strokeWidth="2"><path d="M2 0v2M6 0v2M10 0v2M2 3v9M6 3v9M10 3v9" /></Icon>
                            列
                        </ShelfLabel>
                        <ShelfPills><Pill $width="148px">省市</Pill></ShelfPills>
                    </Shelf>
                    <Shelf>
                        <ShelfLabel>
                            <Icon w={12} h={12} strokeWidth="2"><path d="M0 2h2M0 6h2M0 10h2M3 2h9M3 6h9M3 10h9" /></Icon>
                            行
                        </ShelfLabel>
                        <ShelfPills>
                            <Pill $width="148px" $measure>总和(当期值)</Pill>
                            <Pill $width="148px" $measure>总和(同期值)</Pill>
                        </ShelfPills>
                    </Shelf>
                    <Sheet>
                        <SheetTitle>工作表 1</SheetTitle>
                        <Chart />
                    </Sheet>
                </Main>
            </Body>

            <SheetTabs>
                <SheetTab $width={131}>
                    <Icon w={9} h={12}><path d="M.5 2.5v7c0 2.5 7 2.5 7 0v-7c0-2.5-7-2.5-7 0q3.5 2 7 0" /></Icon>
                    数据源
                </SheetTab>
                <SheetTab $width={61} $current>工作表 1</SheetTab>
                <SheetTab $width={32} aria-label="新建工作表">
                    <Icon w={16} h={16}><path d="M8 12.5H.5V.5h12V7M3.5 9V6M6.5 9V3M9.5 8V5" /><path d="M12 7v8M8 11h8" strokeWidth="2" /></Icon>
                </SheetTab>
                <SheetTab $width={32} aria-label="新建仪表板">
                    <Icon w={16} h={16}><path d="M8 11.5H.5V.5h11V7M6 1v10M1 6h11" /><path d="M12 7v8M8 11h8" strokeWidth="2" /></Icon>
                </SheetTab>
                <SheetTab $width={32} aria-label="新建故事">
                    <Icon w={16} h={16}><path d="M5.5 12.5l-5-2V.5l5 2 5-2V7M5.5 2.5v10" /><path d="M12 7v8M8 11h8" strokeWidth="2" /></Icon>
                </SheetTab>
            </SheetTabs>
            <StatusBar>
                <StatusText>
                    <span>14 个标记</span>
                    <span>2 行 x 7 列</span>
                    <span>总和(同期值): 32,003,775</span>
                </StatusText>
                <StatusCell $width={127} />
                <StatusCell $width={27} />
                <StatusCell $width={27} />
                <StatusCell $width={47} />
                <StatusCell $width={71}>
                    {['M0 0h1v8H0zM6 0v8L2 4z', 'M5 0v8L1 4z', 'M1 0v8l4-4z', 'M0 0v8l4-4zM5 0h1v8H5z'].map((d, i) => (
                        <StatusButton key={d} aria-label={['第一个', '上一个', '下一个', '最后一个'][i]}>
                            <Icon w={6} h={8} stroke="none"><path d={d} fill="#b0b0b0" /></Icon>
                        </StatusButton>
                    ))}
                </StatusCell>
                <StatusCell $width={68}>
                    <StatusButton $wide aria-label="工作表排序程序">
                        <Icon w={11} h={11} stroke="#b5b5b5" strokeWidth="3"><path d="M0 1.5h11M0 5.5h11M0 9.5h11" strokeDasharray="3 1" /></Icon>
                    </StatusButton>
                    <StatusButton $wide aria-label="显示缩略图">
                        <Icon w={11} h={11} stroke="#b5b5b5" strokeWidth="3"><path d="M0 9.5h11" strokeDasharray="3 1" /><path d="M0 3.5h11" strokeWidth="7" /></Icon>
                    </StatusButton>
                    <StatusButton $wide aria-label="显示标签">
                        <Icon w={11} h={11} stroke="none"><path d="M0 0h11v11H0z" fill="#606060" /></Icon>
                    </StatusButton>
                </StatusCell>
                <Watermark href="https://blog.csdn.net/gdut_yy">https://blog.csdn.net/gdut_yy</Watermark>
            </StatusBar>
            <Taskbar>
                <TaskSlot />
                <Clock>10:54</Clock>
            </Taskbar>

            <ShowMePanel>
                <ShowMeTab>
                    <Icon w={14} h={15} stroke="none">
                        {rects([[0, 0, 11, 3, '#876e9b'], [0, 4, 14, 3, '#7fa2cc'], [0, 8, 5, 3, '#f3a578'], [0, 12, 8, 3, '#f8707f']])}
                    </Icon>
                    智能显示
                </ShowMeTab>
                <ShowMeBody>
                    <ThumbGrid>
                        {thumbs.map((t) => (
                            <Thumb key={t.name} aria-label={t.name} $selected={t.name === chartType} onClick={() => setChartType(t.name)}>
                                <svg width="54" height="40" viewBox="1 1 54 40">{t.art}</svg>
                            </Thumb>
                        ))}
                    </ThumbGrid>
                    <Hint>对于散点图，尝试</Hint>
                    <Hint>0 个或多个 <Pill $width="48px">维度</Pill></Hint>
                    <Hint>2 至 4 个 <Pill $width="48px" $measure>度量</Pill></Hint>
                </ShowMeBody>
            </ShowMePanel>
        </Container>
    );
};

export default App;
